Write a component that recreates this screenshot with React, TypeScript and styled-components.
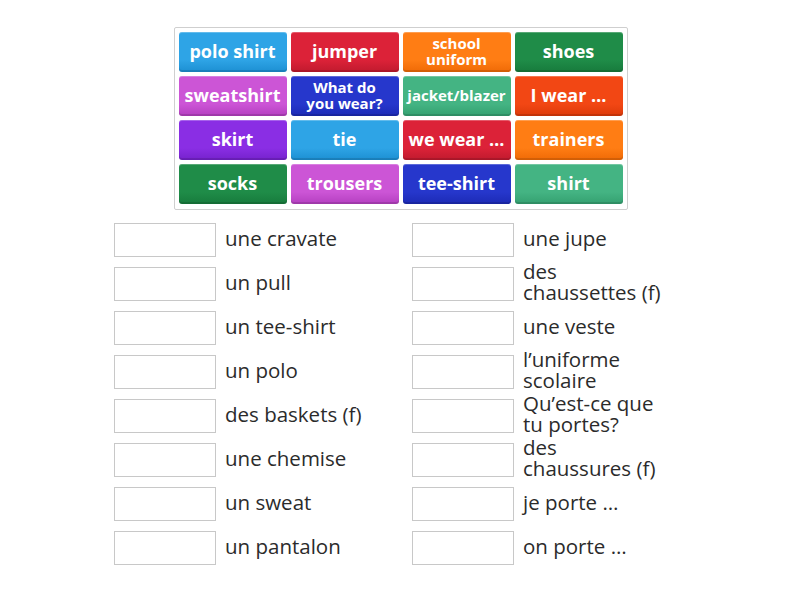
import React from "react";
import styled, { createGlobalStyle } from "styled-components";

const GlobalStyle = createGlobalStyle`
  html, body { margin: 0; padding: 0; background: #ffffff; }
  body { font-family: "Open Sans", "DejaVu Sans", sans-serif; }
`;

const Page = styled.div`
  width: 800px;
  height: 600px;
  padding-top: 27px;
  box-sizing: border-box;
  display: flex;
  flex-direction: column;
  align-items: center;
`;

const TileBoard = styled.div`
  display: grid;
  grid-template-columns: repeat(4, 108px);
  grid-auto-rows: 40px;
  gap: 4px;
  padding: 4px 4px 5px 4px;
  border: 1px solid #cfcfcf;
  border-radius: 2px;
  margin-left: 1px;
`;

const Tile = styled.div<{ $c: string; $d: string; $small?: boolean; $pad?: number }>`
  display: flex;
  align-items: center;
  justify-content: center;
  text-align: center;
  border-radius: 3px;
  background: linear-gradient(to bottom, ${(p) => p.$c} 0%, ${(p) => p.$c} 70%, ${(p) => p.$d} 100%);
  box-shadow: inset 0 1px 0 rgba(255, 255, 255, 0.25), inset 0 -2px 0 rgba(0, 0, 0, 0.12);
  color: #ffffff;
  font-family: "Open Sans", sans-serif;
  font-weight: 700;
  font-size: ${(p) => (p.$small ? "15px" : "18px")};
  line-height: ${(p) => (p.$small ? "16px" : "22px")};
  padding: 0 ${(p) => p.$pad ?? 2}px 2px;
  white-space: ${(p) => (p.$small ? "normal" : "nowrap")};
  overflow: hidden;
`;

const Answers = styled.div`
  margin-top: 13px;
  display: grid;
  grid-template-columns: repeat(2, 274px);
  column-gap: 24px;
  row-gap: 10px;
  grid-auto-flow: column;
  grid-template-rows: repeat(8, 34px);
`;

const Row = styled.div`
  display: flex;
  align-items: center;
  gap: 9px;
`;

const Slot = styled.div`
  flex: 0 0 auto;
  width: 100px;
  height: 32px;
  border: 1px solid #c8c8c8;
  background: #ffffff;
`;

const Label = styled.div`
  width: 142px;
  font-family: "Open Sans", sans-serif;
  font-size: 20.5px;
  line-height: 21px;
  color: #2b2b2b;
  padding-bottom: 4px;
`;

const BLUE = ["#2ea4e6", "#1c8fd2"];
const RED = ["#dc2238", "#c01a2e"];
const ORANGE = ["#ff7d14", "#ef6a06"];
const DGREEN = ["#1f8c48", "#177a3c"];
const MAGENTA = ["#cc55d6", "#b43fc0"];
const INDIGO = ["#2637cc", "#1c2ab5"];
const SEA = ["#44b483", "#34a070"];
const ORED = ["#f24714", "#dc3a0a"];
const PURPLE = ["#8a2ee4", "#7522cc"];

const tiles: { t: string; c: string[]; small?: boolean; pad?: number }[] = [
  { t: "polo shirt", c: BLUE },
  { t: "jumper", c: RED },
  { t: "school uniform", c: ORANGE, small: true, pad: 12 },
  { t: "shoes", c: DGREEN },
  { t: "sweatshirt", c: MAGENTA },
  { t: "What do you wear?", c: INDIGO, small: true, pad: 14 },
  { t: "jacket/blazer", c: SEA, small: true },
  { t: "I wear …", c: ORED },
  { t: "skirt", c: PURPLE },
  { t: "tie", c: BLUE },
  { t: "we wear …", c: RED },
  { t: "trainers", c: ORANGE },
  { t: "socks", c: DGREEN },
  { t: "trousers", c: MAGENTA },
  { t: "tee-shirt", c: INDIGO },
  { t: "shirt", c: SEA },
];

const answers = [
  "une cravate",
  "un pull",
  "un tee-shirt",
  "un polo",
  "des baskets (f)",
  "une chemise",
  "un sweat",
  "un pantalon",
  "une jupe",
  "des chaussettes (f)",
  "une veste",
  "l’uniforme scolaire",
  "Qu’est-ce que tu portes?",
  "des chaussures (f)",
  "je porte …",
  "on porte …",
];

export default function App() {
  return (
    <>
      <GlobalStyle />
      <Page>
        <TileBoard>
          {tiles.map((x, i) => (
            <Tile key={i} $c={x.c[0]} $d={x.c[1]} $small={x.small} $pad={x.pad}>
              {x.t}
            </Tile>
          ))}
        </TileBoard>
        <Answers>
          {answers.map((a, i) => (
            <Row key={i}>
              <Slot />
              <Label>{a}</Label>
            </Row>
          ))}
        </Answers>
      </Page>
    </>
  );
}
